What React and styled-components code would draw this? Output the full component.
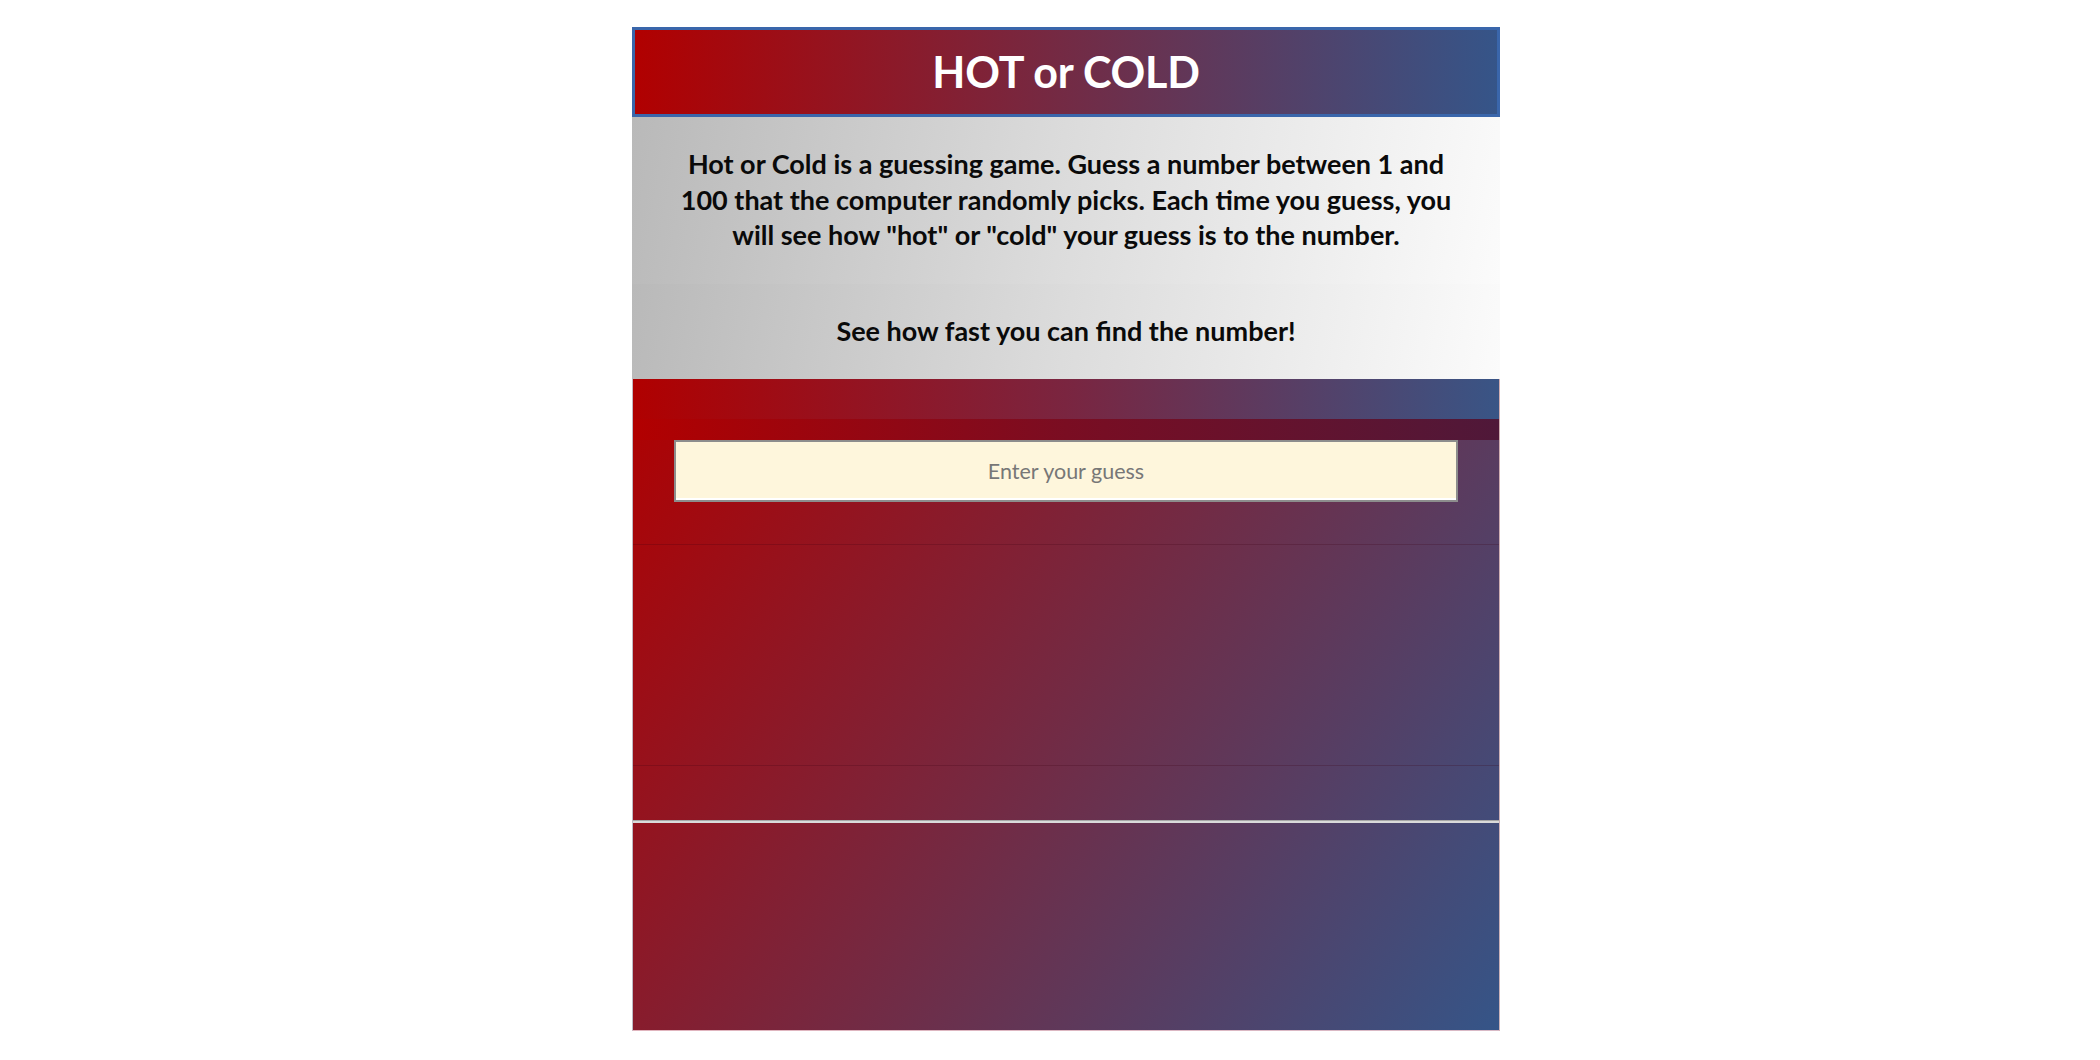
import React from "react";
import styled, { createGlobalStyle } from "styled-components";

const Global = createGlobalStyle`
  html, body { margin: 0; padding: 0; background: #ffffff; }
  body { font-family: Lato, "Open Sans", "Liberation Sans", sans-serif; }
  * { box-sizing: border-box; }
`;

const Page = styled.div`
  padding: 27px 0 0 32px;
  min-height: 1060px;
`;

const Container = styled.main`
  width: 868px;
  margin: 0 auto;
  display: flex;
  flex-direction: column;
`;

const Header = styled.header`
  height: 90px;
  padding-bottom: 2px;
  border: 3px solid #3a66ab;
  background: linear-gradient(92deg, #b10000 0%, #355589 100%);
  display: flex;
  align-items: center;
  justify-content: center;
`;

const Title = styled.h1`
  margin: 0;
  color: #ffffff;
  font-family: Lato, sans-serif;
  font-weight: 700;
  font-size: 43px;
  line-height: 1;
  letter-spacing: -0.2px;
`;

const InfoSection = styled.section`
  padding: 29px 40px 31px;
  background: linear-gradient(100deg, #b9b9b9 0%, #dcdcdc 50%, #fbfbfb 100%);
`;

const InfoText = styled.p`
  margin: 0;
  text-align: center;
  color: #0a0a0a;
  font-family: Lato, sans-serif;
  font-weight: 700;
  font-size: 27px;
  line-height: 35.5px;
`;

const Game = styled.section`
  display: flex;
  flex-direction: column;
  background: linear-gradient(123deg, #b00000 0%, #355588 100%);
  border-left: 1px solid rgba(215, 205, 210, 0.85);
  border-right: 1px solid rgba(215, 205, 210, 0.85);
  border-bottom: 1px solid rgba(230, 200, 210, 0.9);
`;

const TopStrip = styled.div`
  height: 40px;
  background: linear-gradient(93deg, #b00000 0%, #7a2540 50%, #395586 100%);
`;

const Band = styled.div`
  height: 21px;
  background: linear-gradient(90deg, #b20000 0%, #7a0d22 50%, #4f1839 100%);
`;

const GuessForm = styled.form`
  display: flex;
  justify-content: center;
  padding: 0 0 42px;
  border-bottom: 1px solid rgba(60, 0, 20, 0.22);
`;

const GuessInput = styled.input`
  width: 784px;
  height: 62px;
  border: 2px solid #8d8d8d;
  box-shadow: inset 0 -2px 0 #ffffff;
  background: #fef6dc;
  text-align: center;
  font-family: Lato, sans-serif;
  font-size: 21.5px;
  color: #333;
  outline: none;
  &::placeholder { color: #777777; }
`;

const Area = styled.div`
  height: ${(p) => p.$h}px;
  border-bottom: ${(p) => (p.$line ? "1px solid rgba(60, 0, 20, 0.22)" : "none")};
`;

const Rule = styled.hr`
  margin: 0;
  height: 0;
  border: none;
  border-top: 1px solid #a6a6a6;
  border-bottom: 2px solid #dadada;
`;

export default function App() {
  return (
    <>
      <Global />
      <Page>
        <Container>
          <Header>
            <Title>HOT or COLD</Title>
          </Header>
          <InfoSection>
            <InfoText>
              Hot or Cold is a guessing game. Guess a number between 1 and 100
              that the computer randomly picks. Each time you guess, you will
              see how "hot" or "cold" your guess is to the number.
            </InfoText>
          </InfoSection>
          <InfoSection>
            <InfoText>See how fast you can find the number!</InfoText>
          </InfoSection>
          <Game>
            <TopStrip />
            <Band />
            <GuessForm onSubmit={(e) => e.preventDefault()}>
              <GuessInput type="text" placeholder="Enter your guess" />
            </GuessForm>
            <Area $h={221} $line />
            <Area $h={54} />
            <Rule />
            <Area $h={207} />
          </Game>
        </Container>
      </Page>
    </>
  );
}
